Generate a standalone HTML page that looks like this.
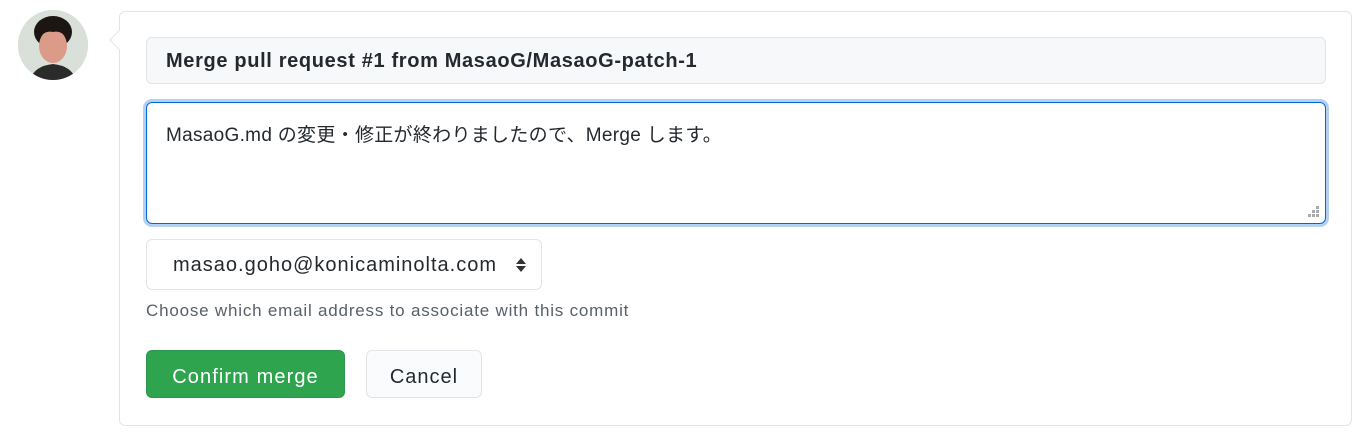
<!DOCTYPE html>
<html><head><meta charset="utf-8"><style>
body{margin:0;width:1359px;height:439px;background:#fff;font-family:"Liberation Sans","Noto Sans CJK JP",sans-serif;position:relative;overflow:hidden;color:#24292e}
.av{position:absolute;left:18px;top:10px;width:70px;height:70px;border-radius:50%;overflow:hidden;background:#d8ddd8}
.card{position:absolute;left:119px;top:11px;width:1231px;height:413px;border:1px solid #e1e4e8;border-radius:6px;background:#fff}
.arr{position:absolute;left:112px;top:33px;width:13px;height:13px;background:#fff;border-left:1px solid #e1e4e8;border-bottom:1px solid #e1e4e8;transform:rotate(45deg)}
.t{position:absolute;left:146px;top:37px;height:47px;border:1px solid #e1e4e8;border-radius:6px;background:#f6f8fa;font-weight:bold;font-size:20px;letter-spacing:0.65px;line-height:47px;padding-left:19px;box-sizing:border-box;width:1180px}
.ta{position:absolute;left:146px;top:102px;width:1180px;height:122px;box-sizing:border-box;border:1px solid #0366d6;border-radius:6px;box-shadow:0 0 0 3px rgba(3,102,214,.3);font-size:19px;padding:17px 19px;letter-spacing:0.3px}
.sel{position:absolute;left:146px;top:239px;width:396px;height:51px;box-sizing:border-box;border:1px solid #e1e4e8;border-radius:6px;font-size:20px;letter-spacing:1px;line-height:51px;padding-left:26px}
.help{position:absolute;left:146px;top:301px;font-size:17px;letter-spacing:0.8px;color:#586069}
.b1{position:absolute;left:146px;top:350px;width:199px;height:48px;border-radius:6px;background:#2ea44f;color:#fff;font-size:20px;letter-spacing:1.1px;line-height:52px;text-align:center;box-sizing:border-box;border:1px solid #2c974b}
.b2{position:absolute;left:366px;top:350px;width:116px;height:48px;border-radius:6px;background:#fafbfc;border:1px solid #e1e4e8;box-sizing:border-box;font-size:20px;letter-spacing:1px;line-height:52px;text-align:center}
</style></head><body>
<div class="av"><svg width="70" height="70"><rect width="70" height="70" fill="#d9dfd9"/><path d="M12 70 Q16 56 35 54 Q54 56 58 70Z" fill="#2b2b2b"/><ellipse cx="35" cy="22" rx="19" ry="16" fill="#1c1612"/><ellipse cx="35" cy="36" rx="14" ry="17" fill="#dc9a88"/><path d="M20 30 Q22 14 35 14 Q48 14 50 30 Q44 20 35 22 Q26 20 20 30Z" fill="#1c1612"/></svg></div>
<div class="card"></div><div class="arr"></div>
<div class="t">Merge pull request #1 from MasaoG/MasaoG-patch-1</div>
<div class="ta">MasaoG.md の変更・修正が終わりましたので、Merge します。
<svg style="position:absolute;right:6px;bottom:5px" width="12" height="12"><g fill="#aaa"><rect x="9" y="0" width="3" height="3"/><rect x="5" y="4" width="3" height="3"/><rect x="9" y="4" width="3" height="3"/><rect x="1" y="8" width="3" height="3"/><rect x="5" y="8" width="3" height="3"/><rect x="9" y="8" width="3" height="3"/></g></svg></div>
<div class="sel">masao.goho@konicaminolta.com
<svg style="position:absolute;left:368px;top:17px" width="12" height="16"><path d="M6 1 L11 7 H1Z M6 15 L11 9 H1Z" fill="#333"/></svg></div>
<div class="help">Choose which email address to associate with this commit</div>
<div class="b1">Confirm merge</div>
<div class="b2">Cancel</div>
</body></html>
